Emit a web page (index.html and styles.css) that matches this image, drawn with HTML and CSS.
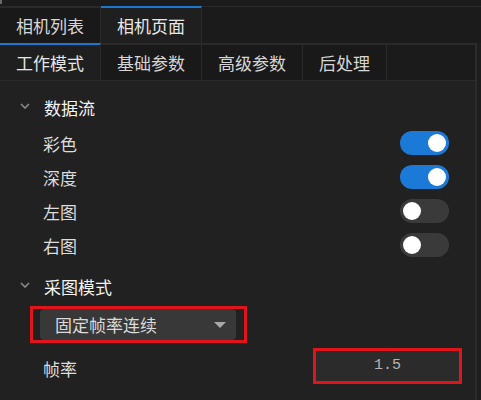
FILE: index.html
```html
<!DOCTYPE html>
<html>
<head>
<meta charset="utf-8">
<link rel="stylesheet" href="styles.css">
</head>
<body>
<div class="topstrip"><span class="mark"></span></div>
<div class="tabbar tabbar-top">
  <div class="tab">相机列表</div>
  <div class="tab active">相机页面</div>
  <div class="filler"></div>
</div>
<div class="panel">
  <div class="main">
    <div class="tabbar tabbar-sub">
      <div class="tab active">工作模式</div>
      <div class="tab">基础参数</div>
      <div class="tab">高级参数</div>
      <div class="tab">后处理</div>
      <div class="filler"></div>
    </div>
    <div class="content">
      <div class="section-head">
        <svg class="chev" width="10" height="6" viewBox="0 0 10 6"><path d="M1 1 L5 5 L9 1" fill="none" stroke="#8a8a8a" stroke-width="1.6"/></svg>
        <span>数据流</span>
      </div>
      <div class="row"><span>彩色</span><span class="toggle on"><span class="knob"></span></span></div>
      <div class="row"><span>深度</span><span class="toggle on"><span class="knob"></span></span></div>
      <div class="row"><span>左图</span><span class="toggle"><span class="knob"></span></span></div>
      <div class="row"><span>右图</span><span class="toggle"><span class="knob"></span></span></div>
      <div class="section-head second">
        <svg class="chev" width="10" height="6" viewBox="0 0 10 6"><path d="M1 1 L5 5 L9 1" fill="none" stroke="#8a8a8a" stroke-width="1.6"/></svg>
        <span>采图模式</span>
      </div>
      <div class="select-wrap">
        <div class="select"><span>固定帧率连续</span><span class="caret"></span></div>
      </div>
      <div class="row rate-row">
        <span>帧率</span>
        <div class="input-wrap"><div class="input">1.5</div></div>
      </div>
    </div>
  </div>
  <div class="scroll"></div>
</div>
</body>
</html>
```
FILE: styles.css
```css
html, body {
  margin: 0;
  padding: 0;
}
body {
  width: 481px;
  height: 400px;
  overflow: hidden;
  background: #212121;
  color: #dcdcdc;
  font-family: "Noto Sans CJK SC", "Noto Sans", sans-serif;
  font-size: 17px;
}
.topstrip {
  height: 6px;
  background: #1b1b1b;
  display: flex;
}
.mark {
  width: 2px;
  height: 4px;
  background: #6a6a6a;
}
.tabbar {
  display: flex;
  background: #1b1b1b;
}
.tab {
  height: 35px;
  line-height: 35px;
  padding: 0 16px;
  border-top: 2px solid #2a2a2a;
  border-right: 1px solid #2a2a2a;
  color: #d6d6d6;
  background: #191919;
  white-space: nowrap;
}
.tab.active {
  border-top-color: #1a78d2;
  background: #1f1f1f;
  color: #e6e6e6;
}
.filler {
  flex: 1;
  border-top: 2px solid #2a2a2a;
}
.tabbar-top .filler {
  border-top-width: 1px;
}
.panel {
  display: flex;
}
.main {
  width: 475px;
  border-right: 2px solid #2c2c2c;
}
.scroll {
  flex: 1;
  background: #1e1e1e;
}
.tabbar-sub {
  border-bottom: 1px solid #2a2a2a;
}
.tabbar-sub .filler {
  background: #1b1b1b;
}
.content {
  padding: 9px 26px 20px 0;
}
.section-head {
  display: flex;
  align-items: center;
  height: 34px;
  margin-bottom: 2px;
  color: #f4f4f4;
}
.section-head.second {
  margin-top: 7px;
  margin-bottom: 3px;
}
.chev {
  margin-left: 20px;
  margin-right: 14px;
  margin-top: -2px;
}
.row {
  display: flex;
  align-items: center;
  justify-content: space-between;
  height: 34px;
  padding-left: 43px;
  color: #dcdcdc;
}
.toggle {
  width: 49px;
  height: 24px;
  border-radius: 12px;
  background: #3a3a3a;
  display: flex;
  align-items: center;
  padding: 0 3px;
  box-sizing: border-box;
}
.toggle.on {
  background: #1b7ad7;
  justify-content: flex-end;
}
.knob {
  width: 18px;
  height: 18px;
  border-radius: 50%;
  background: #ffffff;
}
.select-wrap {
  margin-left: 30px;
  width: 196px;
  border: 3px solid #e2141b;
  padding: 0 8px 0 7px;
}
.select {
  height: 31px;
  background: #383838;
  border-radius: 4px;
  display: flex;
  align-items: center;
  justify-content: space-between;
  padding: 0 10px 0 15px;
  color: #dadada;
}
.caret {
  width: 0;
  height: 0;
  border-left: 6px solid transparent;
  border-right: 6px solid transparent;
  border-top: 6px solid #a8a8a8;
}
.rate-row {
  margin-top: 5px;
  margin-right: -13px;
  height: 36px;
}
.rate-row > span {
  margin-top: 4px;
}
.input-wrap {
  border: 3px solid #e2141b;
}
.input {
  width: 143px;
  height: 30px;
  line-height: 30px;
  background: #2b2b2b;
  text-align: center;
  color: #b4b4b4;
  font-family: "Liberation Mono", "DejaVu Sans Mono", monospace;
  font-size: 15px;
}
```
